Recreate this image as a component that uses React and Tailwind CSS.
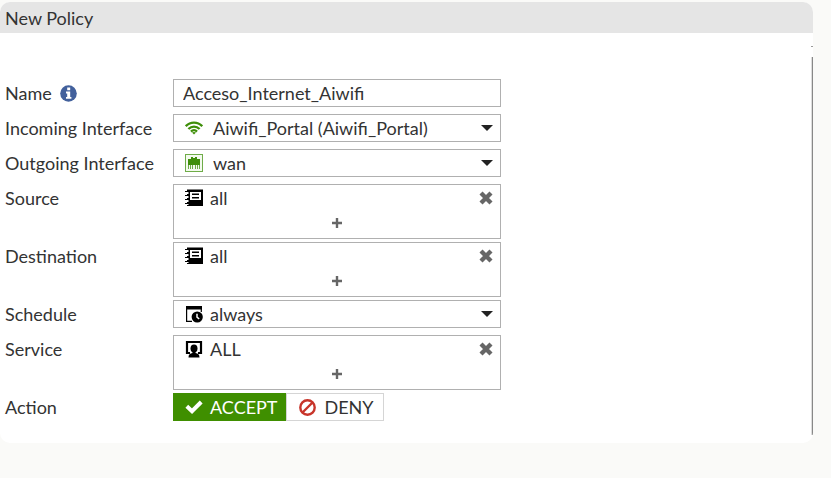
import React, { useState } from "react";

const InfoIcon = () => (
  <svg viewBox="0 0 17 17" className="w-[17px] h-[17px]">
    <circle cx="8.5" cy="8.5" r="8.300" fill="#42609c" />
    <path d="M7.200 2.600H10.2V5.200H7.200ZM6 6.600H10.2V12H11.400V13.800H6V12H7.200V8.400H6Z" fill="#fff" />
  </svg>
);

const CheckIcon = () => (
  <svg viewBox="0 0 18 14" className="w-[18px] h-[14px]" fill="none" stroke="#fff" strokeWidth="4">
    <path d="M1.800 6.300L7 11.200L16.200 2" />
  </svg>
);

const BanIcon = () => (
  <svg viewBox="0 0 17 17" className="w-[17px] h-[17px]" fill="none" stroke="#c8352b" strokeWidth="2.400">
    <circle cx="8.5" cy="8.5" r="7.200" />
    <path d="M13.500 3.500L3.500 13.500" />
  </svg>
);

const WifiIcon = () => (
  <svg viewBox="0 0 18 14" className="w-[18px] h-[14px]" fill="none" stroke="#3f8f0a" strokeWidth="2.300">
    <path d="M0.800 5.200C5.400 0.400 12.600 0.400 17.200 5.200" />
    <path d="M3.400 8C6.600 4.700 11.400 4.700 14.600 8" />
    <path d="M6 10.600C7.800 8.700 10.200 8.700 12 10.600" />
    <path d="M9 13.600L7 11.500C8 10.700 10 10.700 11 11.500Z" fill="#3f8f0a" stroke="none" />
  </svg>
);

const PortIcon = () => (
  <svg viewBox="0 0 18 18" className="w-[18px] h-[18px]">
    <rect x="0.5" y="0.5" width="17" height="17" fill="#f3faee" stroke="#6fac48" />
    <path d="M3 5H6V3H8V4H10V3H12V5H15V11H3Z" fill="#3f8f0a" />
    <path d="M3 11H4V15H3ZM5 11H6V15H5ZM7 11H8V15H7ZM10 11H11V15H10ZM12 11H13V15H12ZM14 11H15V15H14Z" fill="#6fac48" />
  </svg>
);

const AddressIcon = () => (
  <svg viewBox="0 0 18 18" className="w-[18px] h-[18px]">
    <path d="M2 0.500H18V17H2Z" fill="#000" />
    <path d="M5 3H16V11H5Z" fill="#fff" />
    <path d="M7 4.500H14V6H7ZM7 8H14V9.500H7Z" fill="#000" />
    <path d="M2 3H3.500V5H2ZM2 7H3.500V9H2ZM2 11H3.500V13H2ZM2 15H3.500V16H2Z" fill="#fff" />
    <path d="M0 2H3V3H0ZM0 6H3V7H0ZM0 10H3V11H0ZM0 14H3V15H0Z" fill="#000" />
  </svg>
);

const ScheduleIcon = () => (
  <svg viewBox="0 0 18 18" className="w-[18px] h-[18px]">
    <path d="M1 1H17V4.500H1Z" fill="#000" />
    <path d="M1.600 4V16.300H7M16.300 4V7" fill="none" stroke="#000" strokeWidth="1.200" />
    <circle cx="12.200" cy="12" r="5.600" fill="#000" />
    <path d="M12 8.800V12.200L14.200 14" fill="none" stroke="#fff" strokeWidth="1.500" />
  </svg>
);

const ServiceIcon = () => (
  <svg viewBox="0 0 18 18" className="w-[18px] h-[18px]">
    <path d="M5 13H2V2H16V13H13" fill="none" stroke="#000" strokeWidth="2.200" />
    <ellipse cx="9" cy="8.500" rx="3.500" ry="4" fill="#000" />
    <path d="M7.500 11H10.500V13C13 13.300 14.500 14.500 14.500 17.500H3.500C3.500 14.500 5 13.300 7.500 13Z" fill="#000" />
  </svg>
);

const RemoveIcon = () => (
  <svg viewBox="0 0 14 14" className="w-[14px] h-[14px]" stroke="#666" strokeWidth="4.300">
    <path d="M2 2L12 12M12 2L2 12" />
  </svg>
);

const PlusIcon = () => (
  <svg viewBox="0 0 10 10" className="w-[10px] h-[10px]" stroke="#666" strokeWidth="2.400">
    <path d="M5 0V10M0 5H10" />
  </svg>
);

function Row({ label, htmlFor, info, children }) {
  return (
    <div className="flex items-start">
      <label htmlFor={htmlFor} className="w-[168px] shrink-0 h-7 leading-7 flex items-center gap-2">
        {label}
        {info && <InfoIcon />}
      </label>
      <div className="flex-1 max-w-[328px]">{children}</div>
    </div>
  );
}

function SelectBox({ id, icon, options, wide }) {
  return (
    <div className="relative mb-[7px]">
      <span className="absolute left-3 inset-y-0 flex items-center pointer-events-none">{icon}</span>
      <select
        id={id}
        className={`block w-full h-7 pr-8 border border-[#b0b0b0] bg-white appearance-none focus:outline-none ${wide ? "pl-[39px]" : "pl-9"}`}
      >
        {options.map((item) => (
          <option key={item}>{item}</option>
        ))}
      </select>
      <svg viewBox="0 0 12 6" className="absolute right-2 top-[11px] w-3 h-[6px] pointer-events-none">
        <path d="M0 0H12L6 6Z" fill="#222" />
      </svg>
    </div>
  );
}

function MultiBox({ id, name, icon, value }) {
  const [items, setItems] = useState([value]);

  return (
    <div id={id} role="group" aria-label={name} className="h-[55px] mb-[3px] border border-[#b0b0b0] bg-white">
      <div className="h-[26px]">
        {items.map((item) => (
          <div key={item} className="flex items-center h-[26px] pl-[11px] pr-[7px]">
            {icon}
            <span className="ml-[7px] flex-1">{item}</span>
            <button type="button" aria-label={`Remove ${item}`} onClick={() => setItems([])}>
              <RemoveIcon />
            </button>
          </div>
        ))}
      </div>
      <button
        type="button"
        aria-label={`Add ${name}`}
        onClick={() => setItems([value])}
        className="w-full h-6 flex items-center justify-center"
      >
        <PlusIcon />
      </button>
    </div>
  );
}

function App() {
  const [name, setName] = useState("Acceso_Internet_Aiwifi");
  const [action, setAction] = useState("accept");

  return (
    <div className="min-h-screen bg-[#fafaf8] pt-[2px] pr-[18px] font-['Lato',sans-serif] text-[18px] text-[#333]">
      <div className="rounded-[10px] bg-white overflow-hidden">
        <h1 className="h-[31px] leading-8 px-[5px] bg-[#e5e5e5]">New Policy</h1>

        <div className="flex">
          <form className="flex-1 pt-[46px] pl-[5px] pb-[22px]" onSubmit={(e) => e.preventDefault()}>
            <Row label="Name" htmlFor="name" info>
              <input
                id="name"
                type="text"
                value={name}
                onChange={(e) => setName(e.target.value)}
                className="block w-full h-7 mb-[7px] px-[9px] border border-[#b0b0b0] bg-white focus:outline-none"
              />
            </Row>
            <Row label="Incoming Interface" htmlFor="incoming">
              <SelectBox id="incoming" icon={<WifiIcon />} options={["Aiwifi_Portal (Aiwifi_Portal)"]} wide />
            </Row>
            <Row label="Outgoing Interface" htmlFor="outgoing">
              <SelectBox id="outgoing" icon={<PortIcon />} options={["wan"]} wide />
            </Row>
            <Row label="Source">
              <MultiBox id="source" name="Source" icon={<AddressIcon />} value="all" />
            </Row>
            <Row label="Destination">
              <MultiBox id="destination" name="Destination" icon={<AddressIcon />} value="all" />
            </Row>
            <Row label="Schedule" htmlFor="schedule">
              <SelectBox id="schedule" icon={<ScheduleIcon />} options={["always"]} />
            </Row>
            <Row label="Service">
              <MultiBox id="service" name="Service" icon={<ServiceIcon />} value="ALL" />
            </Row>
            <Row label="Action">
              <div className="flex">
                <button
                  type="button"
                  aria-pressed={action === "accept"}
                  onClick={() => setAction("accept")}
                  className="h-7 pl-3 pr-[9px] flex items-center gap-[7px] bg-[#3f8f00] text-white"
                >
                  <CheckIcon />
                  ACCEPT
                </button>
                <button
                  type="button"
                  aria-pressed={action === "deny"}
                  onClick={() => setAction("deny")}
                  className="h-7 pl-3 pr-[9px] flex items-center gap-2 border border-[#d5d5d5] bg-white"
                >
                  <BanIcon />
                  DENY
                </button>
              </div>
            </Row>
          </form>

          {/* Scroll track */}
          <div className="w-[2px] flex flex-col pt-[13px] pb-2">
            <div className="h-px bg-[#999]" />
            <div className="flex-1 mt-[10px] border-l border-r border-l-[#ddd] border-r-[#888]" />
          </div>
        </div>
      </div>
    </div>
  );
}

export default App;
